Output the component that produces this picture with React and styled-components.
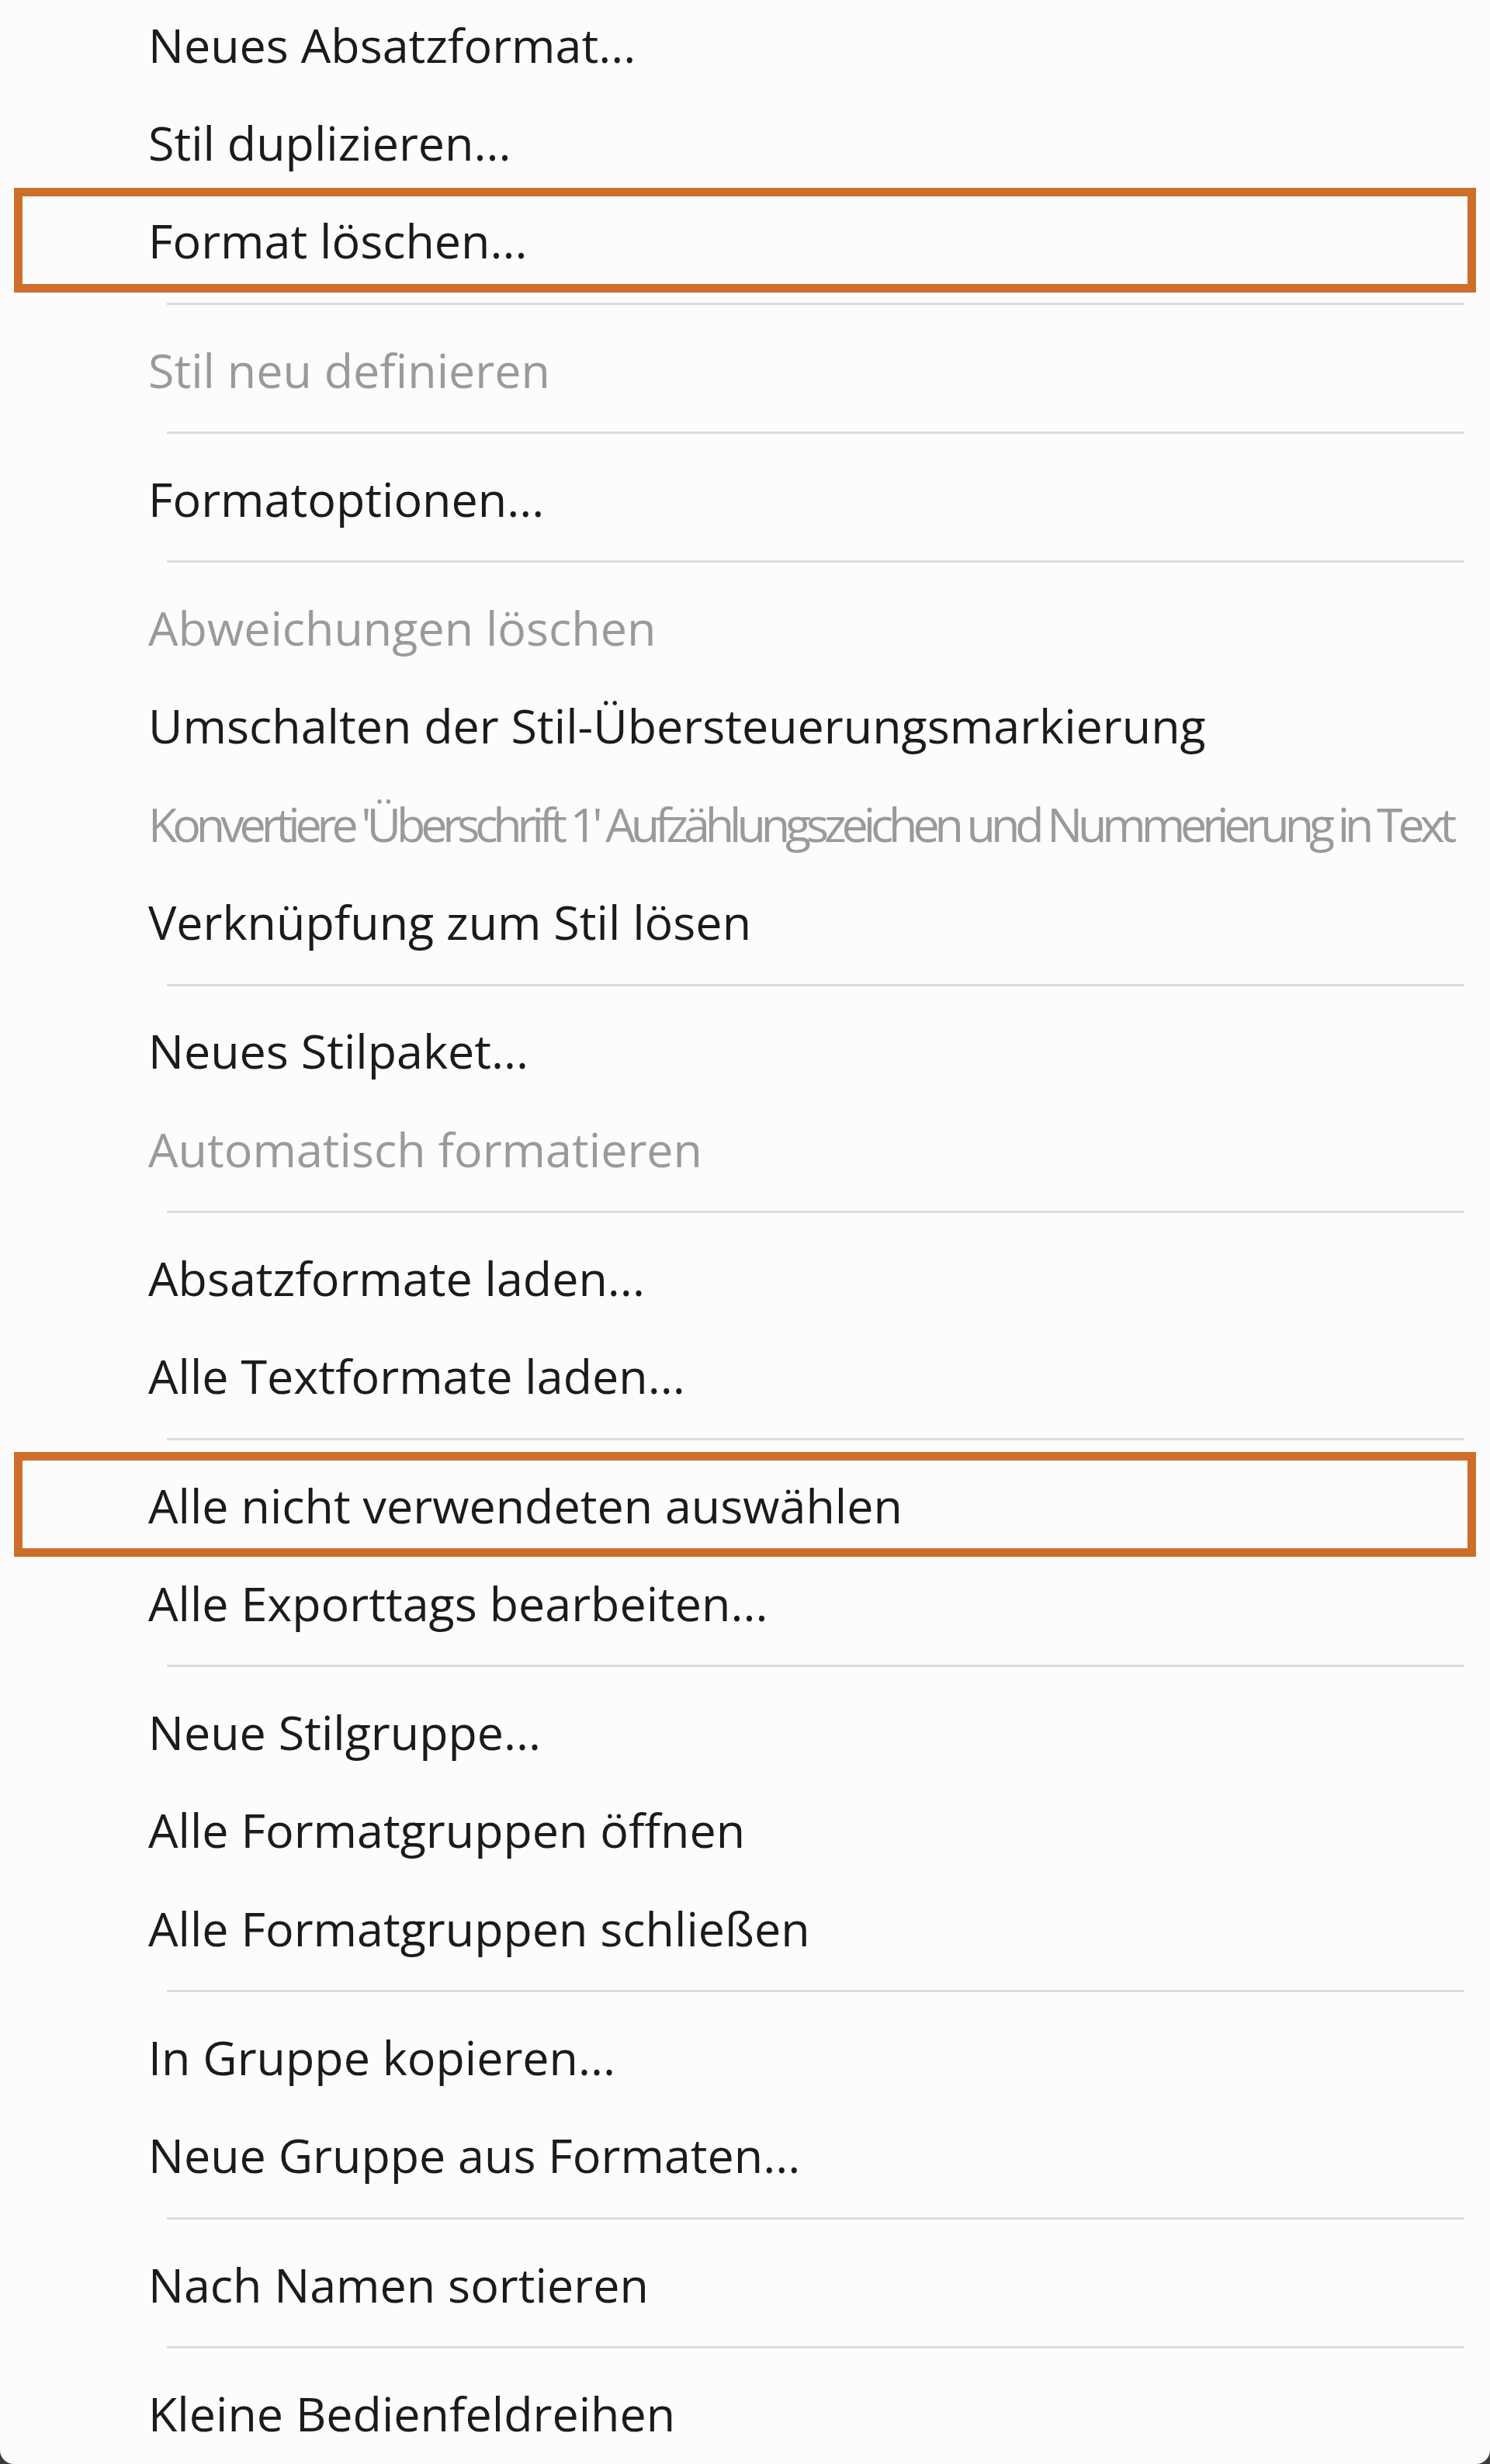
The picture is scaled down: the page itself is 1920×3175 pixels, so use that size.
import React from "react";
import styled, { createGlobalStyle } from "styled-components";

const GlobalStyle = createGlobalStyle`
  html, body {
    margin: 0;
    padding: 0;
    background: #3a3a3a;
  }
  body {
    font-family: "Open Sans", "Noto Sans", "DejaVu Sans", sans-serif;
  }
`;

const Menu = styled.div`
  width: 1920px;
  height: 3175px;
  box-sizing: border-box;
  background: #fcfcfc;
  border-radius: 0 0 18px 18px;
  overflow: hidden;
  display: flex;
  flex-direction: column;
`;

const List = styled.ul`
  list-style: none;
  margin: -6px 0 0 0;
  padding: 0;
  display: flex;
  flex-direction: column;
`;

const Item = styled.li`
  position: relative;
  height: 126.3px;
  flex: none;
  display: flex;
  align-items: center;
  padding-left: 191px;
  font-size: 61px;
  font-weight: 400;
  color: ${(p) => (p.$disabled ? "#9a9a9a" : "#1b1b1b")};
  letter-spacing: ${(p) => (p.$condensed ? "-0.1em" : "normal")};
  white-space: nowrap;
`;

const Separator = styled.li`
  height: 3px;
  flex: none;
  margin: 17px 33px 20px 215px;
  background: #dcdcdc;
`;

const Highlight = styled.span`
  position: absolute;
  top: -5px;
  bottom: -4px;
  left: 18px;
  right: 18px;
  border: 11px solid #cd6f2b;
  pointer-events: none;
`;

const entries = [
  { label: "Neues Absatzformat..." },
  { label: "Stil duplizieren..." },
  { label: "Format löschen...", highlight: true },
  { sep: true },
  { label: "Stil neu definieren", disabled: true },
  { sep: true },
  { label: "Formatoptionen..." },
  { sep: true },
  { label: "Abweichungen löschen", disabled: true },
  { label: "Umschalten der Stil-Übersteuerungsmarkierung" },
  {
    label:
      "Konvertiere 'Überschrift 1' Aufzählungszeichen und Nummerierung in Text",
    disabled: true,
    condensed: true,
  },
  { label: "Verknüpfung zum Stil lösen" },
  { sep: true },
  { label: "Neues Stilpaket..." },
  { label: "Automatisch formatieren", disabled: true },
  { sep: true },
  { label: "Absatzformate laden..." },
  { label: "Alle Textformate laden..." },
  { sep: true },
  { label: "Alle nicht verwendeten auswählen", highlight: true },
  { label: "Alle Exporttags bearbeiten..." },
  { sep: true },
  { label: "Neue Stilgruppe..." },
  { label: "Alle Formatgruppen öffnen" },
  { label: "Alle Formatgruppen schließen" },
  { sep: true },
  { label: "In Gruppe kopieren..." },
  { label: "Neue Gruppe aus Formaten..." },
  { sep: true },
  { label: "Nach Namen sortieren" },
  { sep: true },
  { label: "Kleine Bedienfeldreihen" },
];

export default function App() {
  return (
    <>
      <GlobalStyle />
      <Menu>
        <List>
          {entries.map((e, i) =>
            e.sep ? (
              <Separator key={i} />
            ) : (
              <Item key={i} $disabled={e.disabled} $condensed={e.condensed}>
                {e.label}
                {e.highlight && <Highlight />}
              </Item>
            )
          )}
        </List>
      </Menu>
    </>
  );
}
